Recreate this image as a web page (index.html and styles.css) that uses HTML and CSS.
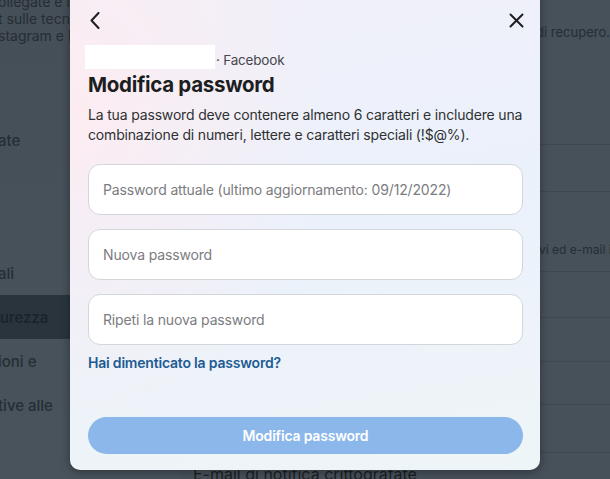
FILE: index.html
```html
<!DOCTYPE html>
<html lang="it">
<head>
    <meta charset="UTF-8">
    <meta name="viewport" content="width=device-width, initial-scale=1.0">
    <title>Modifica password</title>
    <link rel="stylesheet" href="styles.css">
</head>
<body>
    <div class="page">
        <aside class="side">
            <div class="side-intro">
                <span>ollegate e le</span>
                <span>t sulle tecno</span>
                <span>stagram e M</span>
            </div>
            <div class="side-item first">ate</div>
            <div class="side-item second">ali</div>
            <div class="side-item active">urezza</div>
            <div class="side-item">ioni e</div>
            <div class="side-item">tive alle</div>
        </aside>

        <main class="main">
            <div class="row top"><span class="row-text">Aggiungi un'e-mail o un numero di cellulare di recupero.</span></div>
            <div class="row r47"></div>
            <div class="row mid"><span class="row-text over">Controlla i tuoi dispositivi ed e-mail importanti</span></div>
            <div class="row r46"></div>
            <div class="row r44"></div>
            <div class="row r43"></div>
            <div class="row r48"></div>
            <div class="row bottom"><span class="row-label">E-mail di notifica crittografate</span></div>
        </main>
    </div>

    <div class="modal">
        <div class="modal-head">
            <button class="icon-btn back" aria-label="Indietro">
                <svg width="10" height="17" viewBox="0 0 10 17"><polyline points="8.5,1 1.5,8.5 8.5,16" fill="none" stroke="#1c1e21" stroke-width="2" stroke-linecap="round" stroke-linejoin="round"/></svg>
            </button>
            <button class="icon-btn close" aria-label="Chiudi">
                <svg width="15" height="15" viewBox="0 0 15 15"><path d="M1.5 1.5 L13.5 13.5 M13.5 1.5 L1.5 13.5" fill="none" stroke="#1c1e21" stroke-width="2" stroke-linecap="round"/></svg>
            </button>
        </div>

        <div class="account">
            <span class="account-name"></span>
            <span class="account-app">· Facebook</span>
        </div>

        <h1>Modifica password</h1>
        <p class="desc">La tua password deve contenere almeno 6 caratteri e includere una combinazione di numeri, lettere e caratteri speciali (!$@%).</p>

        <div class="fields">
            <input type="password" placeholder="Password attuale (ultimo aggiornamento: 09/12/2022)">
            <input type="password" placeholder="Nuova password">
            <input type="password" placeholder="Ripeti la nuova password">
        </div>

        <a class="forgot" href="#">Hai dimenticato la password?</a>

        <button class="btn" disabled>Modifica password</button>
    </div>
</body>
</html>
```

FILE: styles.css
```css
* {
    margin: 0;
    padding: 0;
    box-sizing: border-box;
}

body {
    width: 610px;
    height: 479px;
    overflow: hidden;
    font-family: Inter, "Noto Sans", sans-serif;
    background: #47515a;
    position: relative;
}

.page {
    display: flex;
    height: 479px;
}

/* pagina sotto l'overlay */
.side {
    width: 180px;
    flex-shrink: 0;
    background: linear-gradient(180deg, #454f57 0%, #48535b 100%);
    color: #262d33;
    overflow: hidden;
}

.side-intro {
    display: flex;
    flex-direction: column;
    margin-top: -7px;
    margin-left: -2px;
    font-size: 14px;
    line-height: 17px;
    white-space: nowrap;
}

.side-item {
    height: 44px;
    display: flex;
    align-items: center;
    margin-left: -2px;
    font-size: 15px;
    font-weight: 500;
    white-space: nowrap;
}

.side-item.first {
    margin-top: 74px;
}

.side-item.second {
    margin-top: 89px;
}

.side-item.active {
    background: #29343d;
    color: #1b2228;
    margin-left: 0;
}

.main {
    flex: 1;
    padding-left: 13px;
    display: flex;
    flex-direction: column;
    overflow: hidden;
}

.row {
    flex-shrink: 0;
    border-bottom: 1px solid #3f4850;
    display: flex;
    align-items: center;
    justify-content: flex-end;
    white-space: nowrap;
}

.row.top {
    height: 145px;
    align-items: flex-start;
    padding-top: 24px;
}

.row.r47 { height: 47px; }
.row.r46 { height: 46px; }
.row.r44 { height: 44px; }
.row.r43 { height: 43px; }
.row.r48 { height: 48px; }

.row.mid {
    height: 80px;
    align-items: flex-start;
    padding-top: 50px;
}

.row.bottom {
    border: none;
    justify-content: flex-start;
    align-items: flex-start;
    padding-top: 11px;
}

.row-text {
    font-size: 13px;
    color: #262d33;
    margin-right: 0;
}

.row-text.over {
    font-size: 12px;
    margin-right: -56px;
}

.row-label {
    font-size: 16px;
    color: #1a1f24;
}

/* finestra modale */
.modal {
    position: absolute;
    left: 70px;
    top: -12px;
    width: 470px;
    height: 482px;
    border-radius: 10px;
    padding: 12px 17px 16px 18px;
    display: flex;
    flex-direction: column;
    background:
        radial-gradient(ellipse 260px 320px at 0% 25%, rgba(253, 236, 241, 0.95), rgba(253, 236, 241, 0) 100%),
        linear-gradient(170deg, #f1f0f9 0%, #ebf1fb 45%, #edf3f9 75%, #eef5f7 100%);
    box-shadow: 0 2px 10px rgba(0, 0, 0, 0.35);
}

.modal-head {
    height: 40px;
    display: flex;
    justify-content: space-between;
    align-items: center;
}

.icon-btn {
    border: none;
    background: none;
    display: flex;
    align-items: center;
    justify-content: center;
    width: 24px;
    height: 24px;
    cursor: pointer;
}

.icon-btn.back {
    margin-left: -5px;
}

.icon-btn.close {
    margin-right: -5px;
}

.account {
    display: flex;
    align-items: center;
    margin-top: 5px;
    height: 24px;
    margin-left: -3px;
}

.account-name {
    width: 130px;
    height: 24px;
    background: #fff;
    margin-right: 1px;
}

.account-app {
    font-size: 13.5px;
    letter-spacing: -0.2px;
    color: #44474c;
    padding-top: 6px;
}

h1 {
    font-size: 20.5px;
    font-weight: 700;
    letter-spacing: -0.3px;
    color: #1c1e21;
    line-height: 28px;
    margin-top: 2px;
}

.desc {
    font-size: 14px;
    line-height: 20px;
    letter-spacing: -0.17px;
    color: #2f3133;
    margin-top: 6px;
}

.fields {
    display: flex;
    flex-direction: column;
    gap: 14px;
    margin-top: 19px;
}

input {
    width: 100%;
    height: 51px;
    border: 1px solid #d3d6db;
    border-radius: 12px;
    background: #fff;
    padding: 0 14px;
    font-family: inherit;
    font-size: 14px;
    letter-spacing: -0.15px;
    color: #1c1e21;
}

input::placeholder {
    color: #7b7c7f;
}

input:focus {
    outline: none;
    border-color: #1b74e4;
}

.forgot {
    margin-top: 8px;
    font-size: 14px;
    line-height: 20px;
    font-weight: 600;
    letter-spacing: -0.2px;
    color: #1d5b93;
    text-decoration: none;
    align-self: flex-start;
}

.btn {
    margin-top: auto;
    height: 37px;
    border: none;
    border-radius: 20px;
    background: #8bb7ea;
    color: #fff;
    font-family: inherit;
    font-size: 14px;
    font-weight: 600;
    letter-spacing: -0.2px;
    cursor: pointer;
}

.btn:disabled {
    cursor: not-allowed;
}
```
